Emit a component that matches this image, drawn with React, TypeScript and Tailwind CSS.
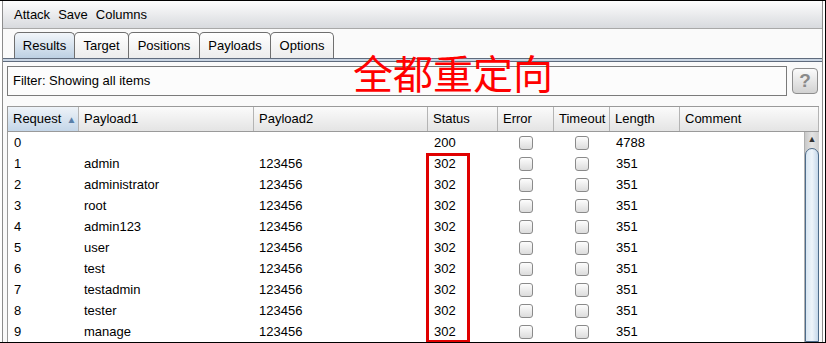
const rows = [
  { req: "0", p1: "", p2: "", status: "200", len: "4788" },
  { req: "1", p1: "admin", p2: "123456", status: "302", len: "351" },
  { req: "2", p1: "administrator", p2: "123456", status: "302", len: "351" },
  { req: "3", p1: "root", p2: "123456", status: "302", len: "351" },
  { req: "4", p1: "admin123", p2: "123456", status: "302", len: "351" },
  { req: "5", p1: "user", p2: "123456", status: "302", len: "351" },
  { req: "6", p1: "test", p2: "123456", status: "302", len: "351" },
  { req: "7", p1: "testadmin", p2: "123456", status: "302", len: "351" },
  { req: "8", p1: "tester", p2: "123456", status: "302", len: "351" },
  { req: "9", p1: "manage", p2: "123456", status: "302", len: "351" },
];

const tabs = ["Results", "Target", "Positions", "Payloads", "Options"];
const tabWidths = ["w-[61px]", "w-[55px]", "w-[72px]", "w-[72px]", "w-[64px]"];

function Checkbox() {
  return (
    <div className="w-[14px] h-[14px] rounded-[3px] border border-[#8a8a8a] bg-gradient-to-b from-[#fdfdfd] to-[#dcdcdc]" />
  );
}

function HeaderCell({
  w,
  label,
  active,
}: {
  w: string;
  label: string;
  active?: boolean;
}) {
  return (
    <div
      className={`${w} h-full flex items-center pl-[5px] border-r border-[#b4b4b4] ${
        active
          ? "bg-gradient-to-b from-[#eef3f8] to-[#c4d6e8]"
          : "bg-gradient-to-b from-[#fbfbfb] to-[#e4e4e4]"
      }`}
    >
      {label}
      {active && <span className="ml-[5px] text-[10px] text-[#5a7fa8]">▲</span>}
    </div>
  );
}

export default function App() {
  return (
    <div
      className="relative w-[826px] h-[343px] overflow-hidden bg-white border-t border-r border-b border-black text-[13px] text-black"
      style={{ fontFamily: '"Liberation Sans", Arial, sans-serif' }}
    >
      <div className="ml-[2px] h-full border-l border-[#8c8c8c] flex flex-col mr-[2px] border-r">
        {/* menu */}
        <div className="h-[28px] flex items-center gap-[8px] pl-[11px] bg-gradient-to-b from-[#fdfdfd] to-[#d8dade] border-b border-[#a8a8a8]">
          <span>Attack</span>
          <span>Save</span>
          <span>Columns</span>
        </div>

        {/* tabs */}
        <div className="h-[29px] flex items-end pl-[11px] bg-[#fafafa]">
          {tabs.map((t, i) => (
            <div
              key={t}
              className={`${tabWidths[i]} h-[26px] flex items-center justify-center rounded-t-[5px] border border-b-0 border-[#6f6f6f] -mr-px ${
                i === 0
                  ? "bg-gradient-to-b from-[#f2f6fa] to-[#bdd0e3]"
                  : "bg-gradient-to-b from-white to-[#ececec]"
              }`}
            >
              {t}
            </div>
          ))}
        </div>
        <div className="h-[4px] border-t border-b border-[#5f6b7d] bg-[#c9d5e3]" />

        {/* filter */}
        <div className="flex items-center gap-[5px] pl-[4px] pt-[4px] bg-[#fafafa]">
          <div className="w-[780px] h-[30px] flex items-center pl-[5px] border border-[#7a7a7a] bg-[#fcfcfc]">
            Filter: Showing all items
          </div>
          <div className="w-[26px] h-[26px] rounded-[4px] border border-[#8e8e8e] bg-gradient-to-b from-[#fbfbfb] to-[#d2d2d2] flex items-center justify-center text-[19px] font-bold text-[#8a8a8a]">
            ?
          </div>
        </div>

        {/* table */}
        <div className="flex-1 pl-[4px] pt-[10px] bg-[#fafafa]">
          <div className="w-[812px] h-full border-l border-t border-[#9a9a9a] bg-white flex flex-col">
            <div className="h-[25px] flex border-b border-[#9a9a9a]">
              <HeaderCell w="w-[71px]" label="Request" active />
              <HeaderCell w="w-[175px]" label="Payload1" />
              <HeaderCell w="w-[174px]" label="Payload2" />
              <HeaderCell w="w-[70px]" label="Status" />
              <HeaderCell w="w-[56px]" label="Error" />
              <HeaderCell w="w-[56px]" label="Timeout" />
              <HeaderCell w="w-[70px]" label="Length" />
              <HeaderCell w="flex-1" label="Comment" />
            </div>
            <div className="flex flex-1">
              <div className="w-[796px]">
                {rows.map((r) => (
                  <div key={r.req} className="h-[21px] flex items-center">
                    <div className="w-[71px] pl-[6px]">{r.req}</div>
                    <div className="w-[175px] pl-[5px]">{r.p1}</div>
                    <div className="w-[174px] pl-[5px]">{r.p2}</div>
                    <div className="w-[70px] pl-[6px]">{r.status}</div>
                    <div className="w-[56px] flex justify-center">
                      <Checkbox />
                    </div>
                    <div className="w-[56px] flex justify-center">
                      <Checkbox />
                    </div>
                    <div className="w-[70px] pl-[6px]">{r.len}</div>
                  </div>
                ))}
              </div>
              {/* scrollbar */}
              <div className="w-[15px] flex flex-col bg-gradient-to-r from-[#c8c8c8] via-[#e4e4e4] to-[#cfcfcf] border-l border-[#b0b0b0]">
                <div className="h-[16px] flex items-center justify-center text-[9px] text-[#333]">
                  ▲
                </div>
                <div className="flex-1 rounded-t-full border border-[#4d6b8a] bg-gradient-to-r from-[#d8e6f2] via-[#eef4fa] to-[#c6d8ea]" />
              </div>
            </div>
          </div>
        </div>
      </div>

      {/* annotations */}
      <div
        className="absolute left-[353px] top-[51px] text-[40px] leading-none text-[#ff0000] tracking-[0px]"
        style={{ fontFamily: '"Noto Sans CJK SC", sans-serif' }}
      >
        全都重定向
      </div>
      <div className="absolute left-[426px] top-[152px] w-[44px] h-[190px] border-[3px] border-[#e00000]" />
    </div>
  );
}
